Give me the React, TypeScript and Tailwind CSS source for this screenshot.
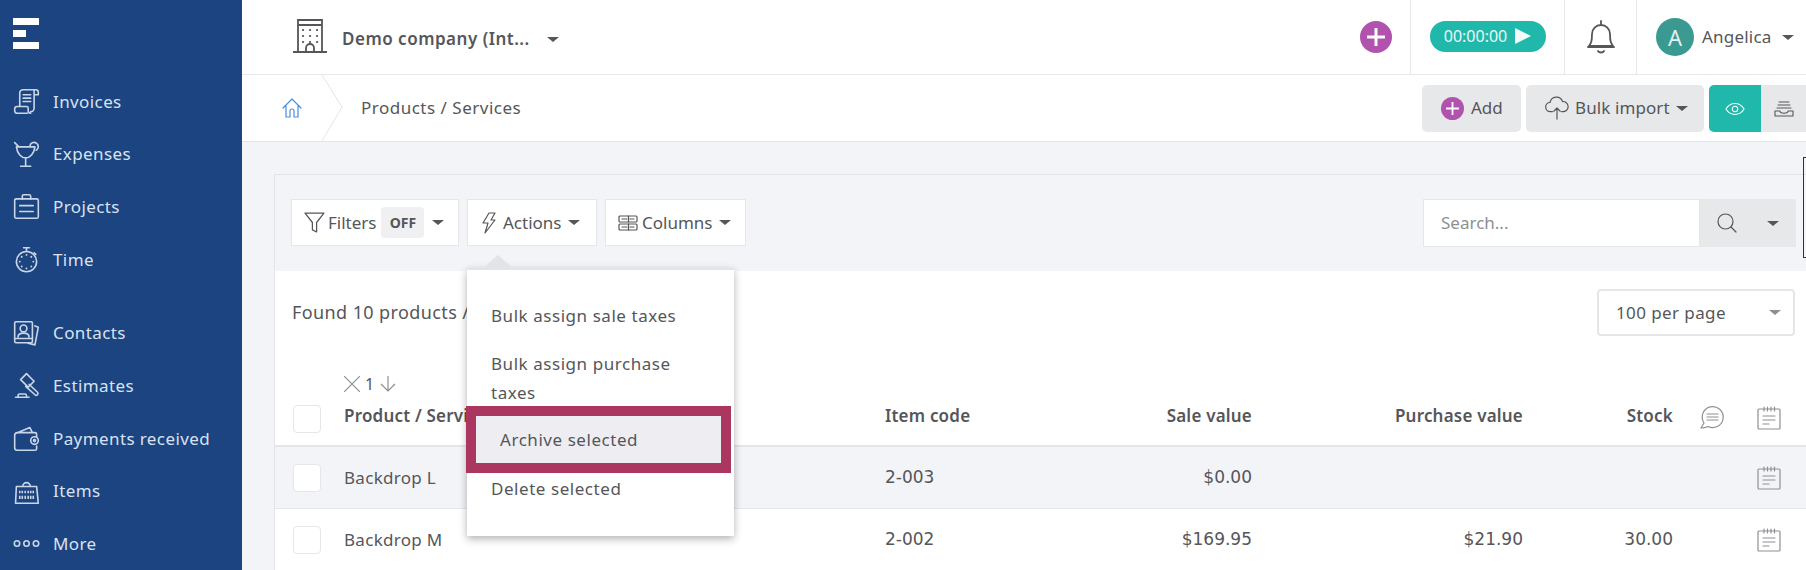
import React from 'react';

const FONT = "font-['Noto_Sans',sans-serif]";
const NUM = "font-['DejaVu_Sans',sans-serif] text-[17px] tracking-normal";

function Caret({ className = 'border-t-[#55565a]' }: { className?: string }) {
  return <span className={`inline-block w-0 h-0 border-x-[6px] border-x-transparent border-t-[5px] ${className}`} />;
}

type IconProps = { className?: string };

const Stroke = ({ className, children, vb = '0 0 32 32', sw = 1.9 }: IconProps & { children: React.ReactNode; vb?: string; sw?: number }) => (
  <svg viewBox={vb} fill="none" stroke="currentColor" strokeWidth={sw} strokeLinecap="round" strokeLinejoin="round" className={className}>
    {children}
  </svg>
);

const InvoiceIcon = (p: IconProps) => (
  <Stroke {...p}>
    <path d="M8 22V6a4 4 0 0 1 4-4h15a3 3 0 0 1 3 3v3h-5M25 3v21a4 4 0 0 1-4 4M17 30H5a3 3 0 0 1-3-3v-2a3 3 0 0 1 3-3h11a2 2 0 0 1 2 2v3a3 3 0 0 0 3 3" />
    <path d="M12 8h9M12 12h9M12 16h9" />
  </Stroke>
);
const CocktailIcon = (p: IconProps) => (
  <Stroke {...p}>
    <path d="M2 2l5 5M4 7h22C25 15 20 20 15 20S5 15 4 7zM15 20v10M9 30h12M20 6a5 5 0 1 1 7.500 5" />
  </Stroke>
);
const BriefcaseIcon = (p: IconProps) => (
  <Stroke {...p}>
    <rect x="2" y="7" width="28" height="23" rx="2" />
    <path d="M11 7V4a2 2 0 0 1 2-2h6a2 2 0 0 1 2 2v3M8 15h16M8 22h16" />
  </Stroke>
);
const TimerIcon = (p: IconProps) => (
  <Stroke {...p}>
    <circle cx="16" cy="18.500" r="12" />
    <path d="M16 6.500V2M12.500 2h7M25 8l2 2" />
    <path d="M16 10.500v.1M16 26.500v.1M8 18.500h.1M24 18.500h.1M10.300 12.800v.1M21.700 12.800v.1M10.300 24.200v.1M21.700 24.200v.1" strokeWidth="2.200" />
  </Stroke>
);
const ContactsIcon = (p: IconProps) => (
  <Stroke {...p}>
    <rect x="2" y="2" width="21" height="25" rx="1.500" />
    <circle cx="12.500" cy="10" r="4" />
    <path d="M6 20c0-6 13-6 13 0M2 22h21M26 7l4 1.500-4 21-8-2" />
  </Stroke>
);
const GavelIcon = (p: IconProps) => (
  <Stroke {...p}>
    <path d="M16 2l9 9-7 7-9-9zM19 14.500L29 24a2 2 0 0 1-3 3L15 17M3 30h16M6 30v-2a2 2 0 0 1 2-2h6a2 2 0 0 1 2 2v2" />
  </Stroke>
);
const WalletIcon = (p: IconProps) => (
  <Stroke {...p}>
    <path d="M28 14v-3a2 2 0 0 0-2-2H5a3 3 0 0 0-3 3v15a3 3 0 0 0 3 3h21a2 2 0 0 0 2-2v-3M3 10l17-7 3 6" />
    <rect x="21" y="14" width="9" height="9" rx="4.500" />
    <circle cx="25.500" cy="18.500" r="1.200" />
  </Stroke>
);
const ItemsIcon = (p: IconProps) => (
  <Stroke {...p}>
    <path d="M4 10h24l2 20H3zM11.500 10a4.500 4.500 0 0 1 9 0" />
    <path d="M8 15v3M11 15v3M14.500 15v3M18 15v3M21 15v3M24 15v3M8 21v4M11 21v4M14.500 21v4M18 21v4M21 21v4M24 21v4" strokeLinecap="butt" />
  </Stroke>
);
const DotsIcon = (p: IconProps) => (
  <svg viewBox="0 0 27 9" fill="none" stroke="currentColor" strokeWidth="1.600" className={p.className}>
    <circle cx="4" cy="4.500" r="2.700" />
    <circle cx="13.500" cy="4.500" r="2.700" />
    <circle cx="23" cy="4.500" r="2.700" />
  </svg>
);
const BuildingIcon = (p: IconProps) => (
  <svg viewBox="0 0 34 34" fill="none" stroke="currentColor" strokeWidth="1.800" className={p.className}>
    <path d="M0 33h34M5 33V1h24V33M5 6h24M13 33v-4a4 4 0 0 1 8 0v4" />
    <path d="M10 11h.1M17 11h.1M24 11h.1M10 17h.1M17 17h.1M24 17h.1M10 23h.1M17 23h.1M24 23h.1" strokeWidth="2.200" strokeLinecap="round" />
  </svg>
);
const PlusCircle = ({ className, thick = 2.500 }: IconProps & { thick?: number }) => (
  <svg viewBox="0 0 32 32" className={className}>
    <circle cx="16" cy="16" r="16" fill="#b052ae" />
    <path d="M16 7v18M7 16h18" stroke="#fff" strokeWidth={thick} fill="none" />
  </svg>
);
const BellIcon = (p: IconProps) => (
  <Stroke vb="0 0 28 34" sw={1.800} {...p}>
    <path d="M14 1v3M2 26c2-3 3-4 3-12a9 9 0 0 1 18 0c0 8 1 9 3 12zM1 27h26M11 31c1 2 5 2 6 0" />
  </Stroke>
);
const HomeIcon = (p: IconProps) => (
  <Stroke vb="0 0 20 20" sw={1.200} {...p}>
    <path d="M1 10l9-9 9 9M4 8v11h4v-6a2 2 0 0 1 4 0v6h4V8" />
  </Stroke>
);
const CloudUpIcon = (p: IconProps) => (
  <Stroke vb="0 0 26 26" sw={1.300} {...p}>
    <path d="M8 17H6a5 5 0 0 1-.5-10A7 7 0 0 1 19 6a5.500 5.500 0 0 1 1 11h-2M13 25V13M9.500 16.500L13 13l3.500 3.500" />
  </Stroke>
);
const EyeIcon = (p: IconProps) => (
  <Stroke vb="0 0 22 14" sw={1.200} {...p}>
    <path d="M1 7c5-8 15-8 20 0-5 8-15 8-20 0z" />
    <circle cx="11" cy="7" r="3" />
  </Stroke>
);
const InboxIcon = (p: IconProps) => (
  <Stroke vb="0 0 20 16" sw={1.100} {...p}>
    <path d="M5 1h10M4 4h12M3 7h14M1 10h5c0 3 8 3 8 0h5v5H1z" />
  </Stroke>
);
const FunnelIcon = (p: IconProps) => (
  <Stroke vb="0 0 20 20" sw={1.200} {...p}>
    <path d="M1 1h18l-7 9v9l-4-2v-7z" />
  </Stroke>
);
const BoltIcon = (p: IconProps) => (
  <Stroke vb="0 0 14 22" sw={1.200} {...p}>
    <path d="M7 1h6l-4 7h4L3 21l3-10H1z" />
  </Stroke>
);
const ColumnsIcon = (p: IconProps) => (
  <Stroke vb="0 0 20 16" sw={1.200} {...p}>
    <rect x="1" y="1" width="18" height="6" rx="1" />
    <rect x="1" y="9" width="18" height="6" rx="1" />
    <path d="M4 4h5M12 4h4M4 12h5M12 12h4M10.500 1v6M10.500 9v6" />
  </Stroke>
);
const SearchIcon = (p: IconProps) => (
  <Stroke vb="0 0 20 20" sw={1.200} {...p}>
    <circle cx="8.500" cy="8.500" r="7.500" />
    <path d="M14 14l5 5" />
  </Stroke>
);
const CommentIcon = (p: IconProps) => (
  <Stroke vb="0 0 24 24" sw={1.200} {...p}>
    <path d="M1 23l3-5a10.500 10.500 0 1 1 4 3.500c-2 1-4.500 1.500-7 1.500zM7 9h11M7 12h11M7 15h11" />
  </Stroke>
);
const NotesIcon = (p: IconProps) => (
  <Stroke vb="0 0 24 24" sw={1.200} {...p}>
    <rect x="1" y="3" width="22" height="20" rx="1" />
    <path d="M7 1v4M10.500 1v4M14 1v4M17.500 1v4M6 10h12M6 14h12M6 18h6" />
  </Stroke>
);

const NAV_TOP = [
  { label: 'Invoices', icon: InvoiceIcon },
  { label: 'Expenses', icon: CocktailIcon },
  { label: 'Projects', icon: BriefcaseIcon },
  { label: 'Time', icon: TimerIcon },
];
const NAV_BOTTOM = [
  { label: 'Contacts', icon: ContactsIcon },
  { label: 'Estimates', icon: GavelIcon },
  { label: 'Payments received', icon: WalletIcon },
  { label: 'Items', icon: ItemsIcon },
];

function NavItem({ label, icon: Icon }: { label: string; icon: (p: IconProps) => React.ReactElement }) {
  return (
    <div className="h-[53px] flex items-center pl-[13px] gap-[13px] text-[17px] tracking-[0.4px] text-[#d8e2f0]">
      <Icon className="w-[27px] h-[27px] text-[#c9d6e8] shrink-0" />
      <span>{label}</span>
    </div>
  );
}

function Sidebar() {
  return (
    <aside className="w-[242px] shrink-0 bg-[#1c4480] flex flex-col">
      <div className="h-[75px] shrink-0 pl-[13px] pt-[18px] flex flex-col gap-[5px]">
        <div className="w-[26px] h-[7px] bg-white" />
        <div className="w-[13px] h-[7px] bg-white" />
        <div className="w-[26px] h-[7px] bg-white" />
      </div>
      {NAV_TOP.map((n) => <NavItem key={n.label} {...n} />)}
      <div className="h-[21px] shrink-0" />
      {NAV_BOTTOM.map((n) => <NavItem key={n.label} {...n} />)}
      <div className="h-[53px] flex items-center pl-[13px] gap-[13px] text-[17px] tracking-[0.4px] text-[#d8e2f0]">
        <DotsIcon className="w-[27px] h-[9px] text-[#c9d6e8] shrink-0" />
        <span>More</span>
      </div>
    </aside>
  );
}

function TopBar() {
  return (
    <header className="h-[75px] shrink-0 bg-white border-b border-[#e7e8ea] flex items-stretch text-[#55565a]">
      <div className="flex items-center pl-[51px] flex-1">
        <BuildingIcon className="w-[34px] h-[34px] mb-[2px]" />
        <span className="ml-[15px] text-[17px] font-semibold tracking-[0.5px] mt-[3px]">Demo company (Int...</span>
        <Caret className="border-t-[#55565a] ml-[17px] mt-[4px]" />
      </div>
      <div className="w-[68px] flex items-center pl-[17px] border-r border-[#e7e8ea]">
        <PlusCircle className="w-[32px] h-[32px] shrink-0" thick={3} />
      </div>
      <div className="w-[154px] flex items-center justify-center border-r border-[#e7e8ea]">
        <div className="w-[116px] h-[31px] mb-[2px] rounded-full bg-[#20b8ab] text-[#e9f8f6] text-[16px] flex items-center justify-center gap-[8px]">
          <span>00:00:00</span>
          <span className="w-0 h-0 border-y-[8px] border-y-transparent border-l-[16px] border-l-[#f2fbfa]" />
        </div>
      </div>
      <div className="w-[72px] flex items-center justify-center border-r border-[#e7e8ea]">
        <BellIcon className="w-[28px] h-[34px] mb-[1px]" />
      </div>
      <div className="w-[169px] flex items-center pl-[19px]">
        <div className="w-[38px] h-[38px] rounded-full bg-[#3a9a92] text-[#e0f0ee] text-[22px] flex items-center justify-center">A</div>
        <span className="ml-[8px] text-[17px] tracking-[0.2px]">Angelica</span>
        <Caret className="border-t-[#55565a] ml-[11px]" />
      </div>
    </header>
  );
}

function BreadcrumbBar() {
  return (
    <div className="h-[67px] shrink-0 bg-white border-b border-[#e3e4e8] flex items-center text-[#55565a]">
      <HomeIcon className="w-[20px] h-[20px] ml-[40px] text-[#4a8ee0] mt-[-1px]" />
      <svg viewBox="0 0 22 66" className="w-[22px] h-[66px] ml-[19px]" fill="none" stroke="#e3e4e8">
        <path d="M1 0l20 32L1 66" />
      </svg>
      <span className="ml-[18px] text-[17px] tracking-[0.5px]">Products / Services</span>
      <div className="ml-auto flex items-center h-full">
        <div className="w-[99px] h-[47px] rounded-[5px] bg-[#e7e8ea] flex items-center pl-[19px] gap-[7px] text-[17px]">
          <PlusCircle className="w-[23px] h-[23px]" thick={2.500} />
          <span>Add</span>
        </div>
        <div className="w-[178px] h-[47px] ml-[5px] rounded-[5px] bg-[#e7e8ea] flex items-center pl-[19px] text-[17px] tracking-[0.1px]">
          <CloudUpIcon className="w-[24px] h-[24px]" />
          <span className="ml-[6px]">Bulk import</span>
          <Caret className="border-t-[#55565a] ml-[6px]" />
        </div>
        <div className="w-[52px] h-[47px] ml-[5px] mt-[1px] rounded-l-[5px] bg-[#20b8ab] flex items-center justify-center text-white">
          <EyeIcon className="w-[20px] h-[14px]" />
        </div>
        <div className="w-[45px] h-[47px] mt-[1px] bg-[#e7e8ea] flex items-center justify-center">
          <InboxIcon className="w-[20px] h-[16px]" />
        </div>
      </div>
    </div>
  );
}

function Toolbar() {
  const btn = 'h-[47px] bg-white border border-[#e5e6e9] flex items-center text-[#55565a] text-[17px]';
  return (
    <div className="h-[96px] bg-[#f3f4f8] pt-[24px] pl-[16px] flex">
      <div className={`${btn} w-[168px] pl-[12px]`}>
        <FunnelIcon className="w-[21px] h-[21px]" />
        <span className="ml-[3px]">Filters</span>
        <span className="ml-[5px] w-[43px] h-[31px] rounded-[4px] bg-[#f0f0f3] text-[14px] font-bold flex items-center justify-center">OFF</span>
        <Caret className="border-t-[#55565a] ml-[8px]" />
      </div>
      <div className="relative ml-[8px]">
        <div className={`${btn} w-[130px] pl-[14px]`}>
          <BoltIcon className="w-[14px] h-[22px]" />
          <span className="ml-[7px]">Actions</span>
          <Caret className="border-t-[#55565a] ml-[7px]" />
        </div>
        <ActionsMenu />
      </div>
      <div className={`${btn} w-[141px] ml-[8px] pl-[12px]`}>
        <ColumnsIcon className="w-[20px] h-[16px]" />
        <span className="ml-[4px]">Columns</span>
        <Caret className="border-t-[#55565a] ml-[7px]" />
      </div>
      <div className="ml-auto mr-[10px] flex h-[48px]">
        <div className="w-[277px] bg-white border border-[#e5e6e9] flex items-center pl-[17px] text-[17px] text-[#8e8f94]">Search...</div>
        <div className="w-[96px] bg-[#e7e8ea] flex items-center pl-[17px] text-[#55565a]">
          <SearchIcon className="w-[20px] h-[20px]" />
          <Caret className="border-t-[#55565a] ml-[30px]" />
        </div>
      </div>
    </div>
  );
}

function ActionsMenu() {
  const item = 'px-[24px] text-[17px] tracking-[0.55px] text-[#55565a]';
  return (
    <div className="absolute left-0 top-[69px] w-[267px] h-[268px] bg-white border-t-2 border-[#e3e4e7] shadow-[0_3px_8px_rgba(0,0,0,0.3)] z-10">
      <span className="absolute left-[16px] -top-[15px] w-0 h-0 border-x-[15px] border-x-transparent border-b-[13px] border-b-[#e3e4e7]" />
      <div className="pt-[31px] flex flex-col">
        <div className={`${item} h-[30px] leading-[30px]`}>Bulk assign sale taxes</div>
        <div className={`${item} mt-[18px] leading-[29px]`}>Bulk assign purchase taxes</div>
        <div className={`${item} mt-[9px] h-[47px] leading-[47px] mx-[9px] px-[15px] w-[245px] bg-[#eeeef2]`}>Archive selected</div>
        <div className={`${item} mt-[11px] h-[30px] leading-[30px]`}>Delete selected</div>
      </div>
      {/* annotation frame */}
      <div className="absolute left-[-1px] top-[136px] w-[265px] h-[67px] border-[10px] border-[#ab3660]" />
    </div>
  );
}

const COLS = 'grid grid-cols-[69px_541px_160px_207px_271px_150px_78px_36px_19px] items-center';

function Checkbox({ className = '' }: { className?: string }) {
  return <div className={`ml-[18px] w-[28px] h-[28px] rounded-[4px] bg-white border border-[#e5e6e9] ${className}`} />;
}

function Row({ name, code, sale, purchase, stock, shaded }: { name: string; code: string; sale: string; purchase: string; stock: string; shaded?: boolean }) {
  return (
    <div className={`${COLS} h-[62px] border-b border-[#e5e6e9] text-[17px] tracking-[0.3px] text-[#55565a] ${shaded ? 'bg-[#f3f4f8]' : 'bg-white'}`}>
      <Checkbox />
      <span>{name}</span>
      <span className={NUM}>{code}</span>
      <span className={`${NUM} text-right`}>{sale}</span>
      <span className={`${NUM} text-right`}>{purchase}</span>
      <span className={`${NUM} text-right`}>{stock}</span>
      <span />
      <NotesIcon className="w-[24px] h-[24px] mx-auto text-[#8e8f94]" />
      <span />
    </div>
  );
}

function Card() {
  return (
    <section className="ml-[32px] mt-[32px] border-t border-l border-[#e3e4e8] flex-1">
      <Toolbar />
      <div className="bg-white">
        <div className="h-[98px] flex items-start pl-[17px] pr-[11px] pt-[18px]">
          <span className="text-[18px] tracking-[0.4px] text-[#55565a] mt-[10px]">Found 10 products / services</span>
          <div className="ml-auto w-[198px] h-[47px] rounded-[4px] border-2 border-[#e5e6e9] flex items-center pl-[17px] pr-[12px] text-[17px] tracking-[0.4px] text-[#55565a]">
            <span>100 per page</span>
            <Caret className="ml-auto border-t-[#8e8f94]" />
          </div>
        </div>
        <div className="h-[29px] pl-[69px] flex items-center text-[#8e8f94]">
          <svg viewBox="0 0 16 16" className="w-[16px] h-[16px]" fill="none" stroke="currentColor" strokeWidth="1.200"><path d="M0 0l16 16M16 0L0 16" /></svg>
          <span className="ml-[5px] text-[16px] text-[#55565a]">1</span>
          <svg viewBox="0 0 16 16" className="ml-[6px] w-[16px] h-[16px]" fill="none" stroke="currentColor" strokeWidth="1.200"><path d="M8 0v15M1 8l7 7 7-7" /></svg>
        </div>
        <div className={`${COLS} h-[49px] pb-[15px] border-b-2 border-[#e5e6e9] text-[17px] font-semibold tracking-[0.2px] text-[#55565a]`}>
          <Checkbox className="self-start mt-[7px]" />
          <span>Product / Service</span>
          <span>Item code</span>
          <span className="text-right">Sale value</span>
          <span className="text-right">Purchase value</span>
          <span className="text-right">Stock</span>
          <CommentIcon className="w-[24px] h-[24px] ml-[27px] mt-[2px] text-[#8e8f94]" />
          <NotesIcon className="w-[24px] h-[24px] mx-auto mt-[4px] text-[#8e8f94]" />
          <span />
        </div>
        <Row shaded name="Backdrop L" code="2-003" sale="$0.00" purchase="" stock="" />
        <Row name="Backdrop M" code="2-002" sale="$169.95" purchase="$21.90" stock="30.00" />
      </div>
    </section>
  );
}

export default function App() {
  return (
    <div className={`${FONT} w-[1806px] h-[570px] overflow-hidden flex`}>
      <Sidebar />
      <main className="flex-1 min-w-0 flex flex-col bg-[#f3f4f8] relative overflow-hidden">
        <TopBar />
        <BreadcrumbBar />
        <Card />
        {/* clipped overlay box at the right edge */}
        <div className="absolute right-[-40px] top-[157px] w-[43px] h-[101px] border border-[#333]" />
      </main>
    </div>
  );
}
